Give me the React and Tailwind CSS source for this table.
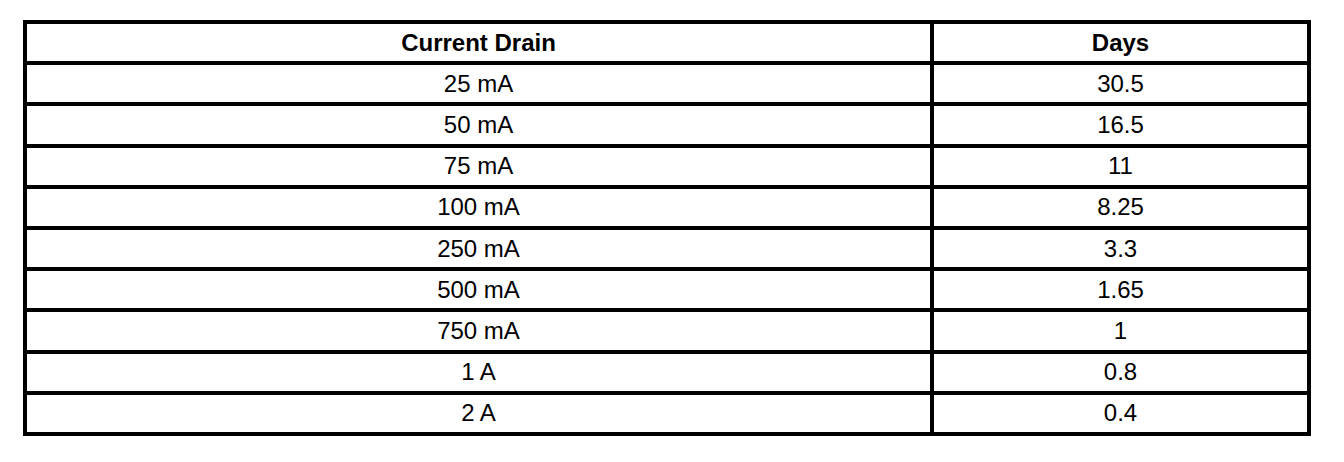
import React from 'react';

const rows = [
  ['25 mA', '30.5'],
  ['50 mA', '16.5'],
  ['75 mA', '11'],
  ['100 mA', '8.25'],
  ['250 mA', '3.3'],
  ['500 mA', '1.65'],
  ['750 mA', '1'],
  ['1 A', '0.8'],
  ['2 A', '0.4'],
];

const Row = ({ left, right, bold = false, first = false }) => (
  <div className={`grid h-[37.2px] grid-cols-[907px_1fr] ${first ? '' : 'box-content border-t-4 border-black'}`}>
    <div className={`flex items-center justify-center border-r-4 border-black ${bold ? 'font-bold' : ''}`}>
      {left}
    </div>
    <div className={`flex items-center justify-center ${bold ? 'font-bold' : ''}`}>
      {right}
    </div>
  </div>
);

export default function App() {
  return (
    <div className="h-[462px] w-[1344px] bg-white pl-[23px] pt-[20px] font-['Liberation_Sans',Arial,sans-serif] text-[24px] leading-none text-black">
      <div className="w-[1288px] border-4 border-black">
        <Row left="Current Drain" right="Days" bold first />
        {rows.map(([drain, days]) => (
          <Row key={drain} left={drain} right={days} />
        ))}
      </div>
    </div>
  );
}
